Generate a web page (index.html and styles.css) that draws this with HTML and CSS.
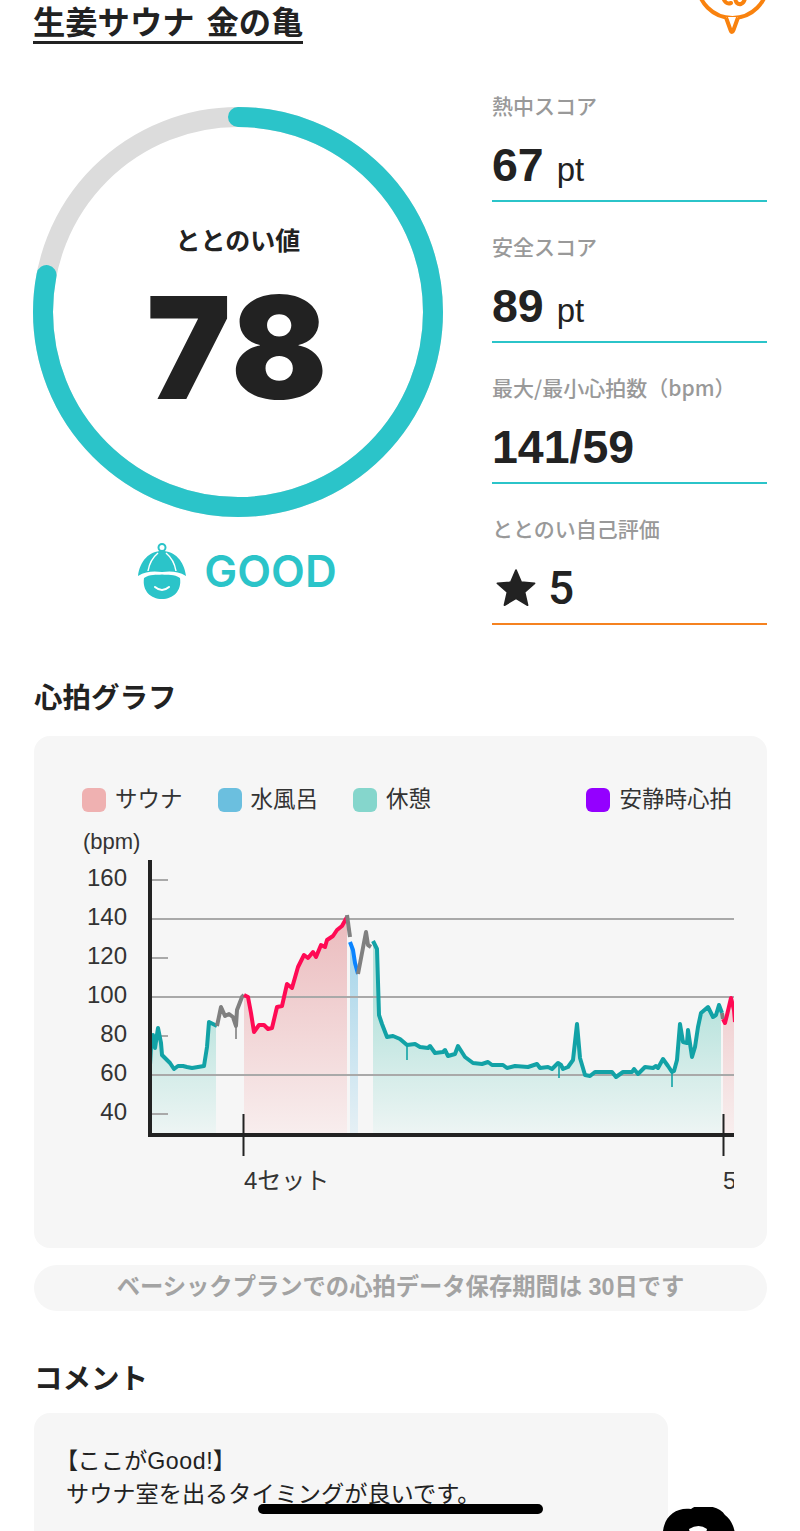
FILE: index.html
```html
<!DOCTYPE html>
<html lang="ja">
<head>
  <meta charset="UTF-8" />
  <title>生姜サウナ 金の亀</title>
  <link rel="stylesheet" href="styles.css">
</head>
<body>
  <div class="page">
    <div class="header">
      <h1 class="title">生姜サウナ 金の亀</h1>
      <svg class="pin" viewBox="0 0 70 36" width="70" height="36">
        <circle cx="35.5" cy="-17" r="35" fill="#fff" stroke="#f9820e" stroke-width="4"/>
        <path d="M29 17 L35 32 L41 17 Z" fill="#fff"/>
        <path d="M29 17.5 L33.5 30 Q35 34 36.5 30 L41 17.5" fill="none" stroke="#f9820e" stroke-width="4" stroke-linejoin="round"/>
        <path d="M26 -3 Q28 5 34 3 M38 -2 Q39 5 44 4 Q48 2 48 -3" fill="none" stroke="#f9820e" stroke-width="4" stroke-linecap="round"/>
      </svg>
    </div>

    <div class="summary">
      <div class="score">
        <div class="ring">
          <svg class="ring-chart" viewBox="0 0 410 410" width="410" height="410">
            <circle cx="205" cy="205" r="195" fill="none" stroke="#dcdcdc" stroke-width="20"/>
            <circle cx="205" cy="205" r="195" fill="none" stroke="#2bc4c9" stroke-width="20" stroke-linecap="round"
              stroke-dasharray="955.7 1225.2" transform="rotate(-90 205 205)"/>
          </svg>
          <div class="ring-text">
            <div class="ring-label">ととのい値</div>
            <div class="ring-value">78</div>
          </div>
        </div>
        <div class="rank">
          <svg class="rank-icon" viewBox="0 0 54 60" width="54" height="60">
            <circle cx="26" cy="6.5" r="3.5" fill="none" stroke="#2bc4c9" stroke-width="2"/>
            <path d="M2 35 C4 20 13 10 26 10 C39 10 48 20 50 35 C42 30 34 30 26 31 C18 30 10 30 2 35 Z" fill="#2bc4c9"/>
            <path d="M22 12 C16 17 13 24 12 30 M30 12 C36 17 39 24 40 30" fill="none" stroke="#fff" stroke-width="1.5"/>
            <path d="M8 37 C14 33 20 34 26 33.5 C32 34 38 33 44 37 C46 50 37 58 26 58 C15 58 6 50 8 37 Z" fill="#2bc4c9"/>
            <path d="M19 46 Q26 52 33 46" fill="none" stroke="#fff" stroke-width="2" stroke-linecap="round"/>
          </svg>
          <span class="rank-text">GOOD</span>
        </div>
      </div>

      <div class="stats">
        <div class="stat">
          <div class="stat-label">熱中スコア</div>
          <div class="stat-value">67 <span class="unit">pt</span></div>
        </div>
        <div class="stat">
          <div class="stat-label">安全スコア</div>
          <div class="stat-value">89 <span class="unit">pt</span></div>
        </div>
        <div class="stat">
          <div class="stat-label">最大/最小心拍数（bpm）</div>
          <div class="stat-value">141/59</div>
        </div>
        <div class="stat stat-self">
          <div class="stat-label">ととのい自己評価</div>
          <div class="stat-value stat-star">
            <svg viewBox="0 0 24 24" width="42" height="42"><path d="M12 1.8 L15 8.7 L22.6 9.4 L16.9 14.4 L18.6 21.8 L12 17.9 L5.4 21.8 L7.1 14.4 L1.4 9.4 L9 8.7 Z" fill="#222" stroke="#222" stroke-width="1" stroke-linejoin="round"/></svg>
            <span>5</span>
          </div>
        </div>
      </div>
    </div>

    <h2 class="section-title">心拍グラフ</h2>
    <div class="graph">
      <div class="legend">
        <div class="legend-item"><i class="swatch sauna"></i>サウナ</div>
        <div class="legend-item"><i class="swatch bath"></i>水風呂</div>
        <div class="legend-item"><i class="swatch rest"></i>休憩</div>
        <div class="legend-item legend-end"><i class="swatch resting"></i>安静時心拍</div>
      </div>
      <!-- viewBox uses page coordinates so the points are easy to read off -->
      <svg class="plot" viewBox="82 830 652 370" width="652" height="370">
        <defs>
          <linearGradient id="fillPink" gradientUnits="userSpaceOnUse" x1="0" y1="920" x2="0" y2="1135">
            <stop offset="0" stop-color="#ebbcbe"/><stop offset="1" stop-color="#f8eeee"/>
          </linearGradient>
          <linearGradient id="fillTeal" gradientUnits="userSpaceOnUse" x1="0" y1="1000" x2="0" y2="1135">
            <stop offset="0" stop-color="#b6e2dc"/><stop offset="1" stop-color="#eef5f4"/>
          </linearGradient>
          <linearGradient id="fillBlue" gradientUnits="userSpaceOnUse" x1="0" y1="950" x2="0" y2="1135">
            <stop offset="0" stop-color="#a9d6ea"/><stop offset="1" stop-color="#e6f0f5"/>
          </linearGradient>
        </defs>

        <polygon fill="url(#fillTeal)" points="150,1065 151,1047 153,1035 155,1048 158,1028 161,1043 162,1055 167,1060 170,1063 174,1069 178,1066 183,1066 187,1067 192,1068 198,1067 204,1066 207,1047 209,1022 213,1024 216,1026 216,1133 150,1133"/>
        <polygon fill="url(#fillPink)" points="244,995 248,997 251,1013 254,1032 259,1025 264,1025 268,1029 272,1028 277,1007 282,1006 287,984 292,988 298,967 304,955 308,958 313,952 316,957 321,945 325,947 327,940 333,936 337,930 342,926 347,917 347,1133 244,1133"/>
        <polygon fill="url(#fillBlue)" points="350,942 353,950 355,963 358,974 358,1133 350,1133"/>
        <polygon fill="url(#fillTeal)" points="373,941 377,949 379,1015 382,1024 387,1037 393,1036 400,1039 407,1045 415,1044 420,1047 428,1048 430,1046 435,1053 443,1052 445,1050 448,1056 455,1054 458,1046 465,1057 473,1063 482,1064 488,1062 492,1065 503,1065 507,1068 515,1066 528,1067 537,1064 540,1068 548,1067 552,1069 558,1063 561,1065 563,1069 568,1067 573,1060 577,1024 580,1058 585,1075 590,1076 595,1072 612,1072 616,1077 623,1072 632,1072 634,1069 638,1074 645,1067 653,1068 656,1066 658,1068 663,1059 668,1066 672,1072 674,1071 677,1060 680,1024 683,1042 687,1043 688,1030 692,1057 695,1047 698,1027 701,1013 708,1007 713,1017 716,1015 719,1005 721,1012 721,1133 373,1133"/>
        <polygon fill="url(#fillPink)" points="723,1019 725,1023 727,1015 731,998 734,1010 734,1133 723,1133"/>

        <g class="grid">
          <line x1="150" x2="734" y1="919" y2="919"/>
          <line x1="150" x2="734" y1="997" y2="997"/>
          <line x1="150" x2="734" y1="1075" y2="1075"/>
          <line x1="150" x2="168" y1="880" y2="880"/>
          <line x1="150" x2="168" y1="958" y2="958"/>
          <line x1="150" x2="168" y1="1036" y2="1036"/>
          <line x1="150" x2="168" y1="1114" y2="1114"/>
        </g>

        <g class="trace">
          <polyline class="trace-rest" points="150,1065 151,1047 153,1035 155,1048 158,1028 161,1043 162,1055 167,1060 170,1063 174,1069 178,1066 183,1066 187,1067 192,1068 198,1067 204,1066 207,1047 209,1022 213,1024 217,1026"/>
          <polyline class="trace-gap" points="217,1026 221,1007 225,1016 229,1014 233,1017 236,1026 237,1010 242,997 244,995"/>
          <polyline class="trace-spike trace-gap" points="236,1020 236,1039"/>
          <polyline class="trace-sauna" points="244,995 248,997 251,1013 254,1032 259,1025 264,1025 268,1029 272,1028 277,1007 282,1006 287,984 292,988 298,967 304,955 308,958 313,952 316,957 321,945 325,947 327,940 333,936 337,930 342,926 347,917"/>
          <polyline class="trace-gap" points="347,915 350,937"/>
          <polyline class="trace-bath" points="350,942 353,950 355,963 358,974"/>
          <polyline class="trace-gap" points="358,974 362,953 366,932 368,945 371,947"/>
          <polyline class="trace-rest" points="373,941 377,949 379,1015 382,1024 387,1037 393,1036 400,1039 407,1045 415,1044 420,1047 428,1048 430,1046 435,1053 443,1052 445,1050 448,1056 455,1054 458,1046 465,1057 473,1063 482,1064 488,1062 492,1065 503,1065 507,1068 515,1066 528,1067 537,1064 540,1068 548,1067 552,1069 558,1063 561,1065 563,1069 568,1067 573,1060 577,1024 580,1058 585,1075 590,1076 595,1072 612,1072 616,1077 623,1072 632,1072 634,1069 638,1074 645,1067 653,1068 656,1066 658,1068 663,1059 668,1066 672,1072 674,1071 677,1060 680,1024 683,1042 687,1043 688,1030 692,1057 695,1047 698,1027 701,1013 708,1007 713,1017 716,1015 719,1005 722,1013"/>
          <polyline class="trace-spike trace-rest" points="407,1045 407,1060"/>
          <polyline class="trace-spike trace-rest" points="559,1065 559,1078"/>
          <polyline class="trace-spike trace-rest" points="672,1072 672,1087"/>
          <polyline class="trace-gap" points="722,1013 723,1019"/>
          <polyline class="trace-sauna" points="723,1019 725,1023 727,1015 731,998 734,1010 735,1022"/>
        </g>

        <g class="axis">
          <line x1="150" x2="150" y1="860" y2="1137"/>
          <line x1="148" x2="734" y1="1135" y2="1135"/>
        </g>
        <g class="set-mark">
          <line x1="243.5" x2="243.5" y1="1114" y2="1156"/>
          <line x1="723.5" x2="723.5" y1="1114" y2="1156"/>
        </g>

        <text class="unit-label" x="83" y="849">(bpm)</text>
        <g class="tick-labels">
          <text x="127" y="886">160</text>
          <text x="127" y="925">140</text>
          <text x="127" y="964">120</text>
          <text x="127" y="1003">100</text>
          <text x="127" y="1042">80</text>
          <text x="127" y="1081">60</text>
          <text x="127" y="1120">40</text>
        </g>
        <text class="set-label" x="244" y="1189">4セット</text>
        <text class="set-label" x="723" y="1189">5</text>
      </svg>
    </div>

    <div class="notice">ベーシックプランでの心拍データ保存期間は 30日です</div>

    <h2 class="section-title comment-title">コメント</h2>
    <div class="comment-row">
      <div class="comment">
        <p><span class="bracket">【</span>ここが<span class="latin">Good!</span><span class="bracket">】</span></p>
        <p>サウナ室を出るタイミングが良いです。</p>
      </div>
      <svg class="avatar" viewBox="0 0 75 60" width="75" height="60">
        <path d="M2 24 C4 8 16 0 30 2 C36 -4 58 -2 64 8 C72 14 75 24 75 40 L75 60 L2 60 Z" fill="#000"/>
        <path d="M28 22 Q38 16 46 22 L44 30 L30 30 Z" fill="#fff"/>
      </svg>
    </div>

    <div class="home-bar"></div>
  </div>
</body>
</html>
```

FILE: styles.css
```css
* {
  box-sizing: border-box;
}
body {
  margin: 0;
  background: #fff;
  color: #222;
  font-family: "Liberation Sans", "Noto Sans CJK JP", sans-serif;
}
.page {
  position: relative;
  width: 800px;
  height: 1531px;
  padding: 0 33px 0 34px;
  overflow: hidden;
}
.header {
  display: flex;
  justify-content: space-between;
  align-items: flex-start;
  height: 44px;
}
.title {
  margin: 0 0 0 -1px;
  height: 44px;
  padding-top: 4px;
  font-size: 32.3px;
  line-height: 38px;
  font-weight: 700;
  word-spacing: 3px;
  border-bottom: 3px solid #222;
  white-space: nowrap;
}
.pin {
  display: block;
}
.summary {
  display: flex;
  gap: 49px;
  margin-left: -1px;
  margin-top: 17px;
}
.score {
  width: 410px;
  padding-top: 46px;
}
.ring {
  display: grid;
}
.ring > * {
  grid-area: 1 / 1;
}
.ring-chart {
  display: block;
}
.ring-text {
  text-align: center;
  padding-top: 116px;
}
.ring-label {
  font-size: 25px;
  line-height: 36px;
  font-weight: 700;
}
.ring-value {
  margin-top: 13px;
  font-family: Inter, sans-serif;
  font-size: 142px;
  line-height: 150px;
  font-weight: 900;
  letter-spacing: 2px;
}
.rank {
  display: flex;
  align-items: center;
  justify-content: center;
  gap: 14px;
  margin-top: 24px;
  margin-left: -3px;
}
.rank-icon {
  display: block;
}
.rank-text {
  color: #2bc4c9;
  font-family: Inter, sans-serif;
  font-size: 44px;
  font-weight: 600;
}
.stats {
  width: 275px;
}
.stat {
  height: 141px;
  padding-top: 29px;
  border-bottom: 2px solid #2bc4c9;
}
.stat-self {
  border-bottom-color: #f58220;
}
.stat-label {
  color: #999;
  font-family: "Noto Sans CJK JP", sans-serif;
  font-size: 21px;
  line-height: 30px;
  font-weight: 500;
  white-space: nowrap;
}
.stat-value {
  margin-top: 17px;
  font-size: 46.5px;
  line-height: 56px;
  font-weight: 700;
}
.unit {
  font-size: 33px;
  font-weight: 400;
}
.stat-star {
  display: flex;
  align-items: center;
  gap: 11px;
  font-family: Roboto, sans-serif;
  font-size: 46px;
  font-weight: 500;
}
.stat-star svg {
  display: block;
  margin-left: 3px;
}
.section-title {
  margin: 53px 0 0;
  font-size: 28.5px;
  line-height: 40px;
  font-weight: 700;
}
.graph {
  height: 512px;
  margin-top: 18px;
  padding: 52px 33px 0 48px;
  background: #f6f6f6;
  border-radius: 16px;
}
.legend {
  display: flex;
  gap: 35px;
  height: 24px;
  padding-right: 2px;
}
.legend-item {
  display: flex;
  align-items: center;
  gap: 9px;
  font-size: 22.5px;
  line-height: 24px;
  color: #333;
}
.legend-end {
  margin-left: auto;
}
.swatch {
  display: block;
  width: 24px;
  height: 24px;
  border-radius: 6px;
}
.sauna { background: #efb1b1; }
.bath { background: #6bbfdf; }
.rest { background: #85d6cc; }
.resting { background: #9400ff; }
.plot {
  display: block;
  margin-top: 18px;
}
.grid line {
  stroke: #a9a9a9;
  stroke-width: 2;
}
.trace polyline {
  fill: none;
  stroke-width: 4;
  stroke-linejoin: round;
}
.trace .trace-spike {
  stroke-width: 2;
  opacity: 0.8;
}
.trace-rest { stroke: #12a2a6; }
.trace-gap { stroke: #808080; }
.trace-sauna { stroke: #ff0a54; }
.trace-bath { stroke: #0a84ff; }
.axis line {
  stroke: #222;
  stroke-width: 4;
}
.set-mark line {
  stroke: #222;
  stroke-width: 2;
}
.plot text {
  fill: #333;
}
.unit-label {
  font-size: 22px;
}
.tick-labels {
  font-size: 24px;
  text-anchor: end;
}
.set-label {
  font-size: 24px;
}
.notice {
  height: 46px;
  margin-top: 17px;
  background: #f6f6f6;
  border-radius: 23px;
  color: #a3a3a3;
  font-size: 23.3px;
  line-height: 44px;
  font-weight: 700;
  text-align: center;
  white-space: nowrap;
}
.comment-title {
  margin-top: 48px;
}
.comment-row {
  display: flex;
  margin-top: 14px;
}
.comment {
  width: 634px;
  height: 200px;
  padding: 32px 32px;
  background: #f6f6f6;
  border-radius: 16px;
  font-size: 23.2px;
  line-height: 33px;
}
.comment p {
  margin: 0;
}
.bracket {
  font-feature-settings: "palt";
}
.latin {
  letter-spacing: 0.6px;
}
.avatar {
  display: block;
  flex: none;
  margin-top: 94px;
  margin-left: -7px;
}
.home-bar {
  position: absolute;
  left: 258px;
  top: 1504px;
  width: 285px;
  height: 10px;
  border-radius: 5px;
  background: #000;
}
```
